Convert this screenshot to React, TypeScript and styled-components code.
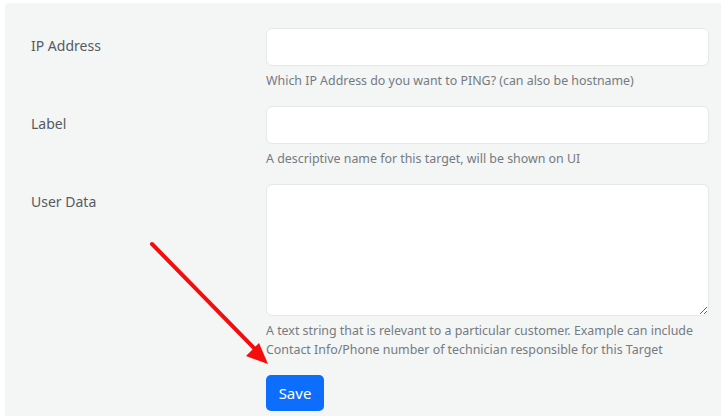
import React from "react";
import styled, { createGlobalStyle } from "styled-components";

const Global = createGlobalStyle`
  html, body { margin: 0; padding: 0; background: #ffffff; }
  body { font-family: "Noto Sans", "Liberation Sans", sans-serif; }
  * { box-sizing: border-box; }
`;

const Page = styled.div`
  position: relative;
  width: 721px;
  height: 416px;
  overflow: hidden;
  padding: 3px 0 0 5px;
`;

const Panel = styled.div`
  background: #f4f5f5;
  height: 420px;
  padding: 25px 12px 0 26px;
  border-radius: 4px 0 0 0;
`;

const Row = styled.div`
  display: grid;
  grid-template-columns: 235px 1fr;
  margin-bottom: 16px;
`;

const Label = styled.label`
  font-size: 14px;
  color: #555b60;
  padding-top: 7px;
  line-height: 22px;
`;

const Field = styled.div`
  display: flex;
  flex-direction: column;
`;

const Input = styled.input`
  height: 38px;
  border: 1px solid #e6e7e7;
  border-radius: 6px;
  background: #fff;
  outline: none;
`;

const TextArea = styled.textarea`
  height: 132px;
  border: 1px solid #e6e7e7;
  border-radius: 6px;
  background: #fff;
  outline: none;
  resize: vertical;
`;

const Help = styled.div`
  margin-top: 5px;
  font-size: 12.4px;
  line-height: 19px;
  color: #747b81;
  white-space: nowrap;
`;

const Button = styled.button`
  display: block;
  width: 58px;
  height: 36px;
  border: none;
  border-radius: 5px;
  background: #0d6efd;
  color: #fff;
  font-family: inherit;
  font-size: 15px;
  padding: 0;
  margin-top: 0;
`;

const Arrow = styled.svg`
  position: absolute;
  left: 0;
  top: 0;
  pointer-events: none;
`;

export default function App() {
  return (
    <Page>
      <Global />
      <Panel>
        <Row>
          <Label>IP Address</Label>
          <Field>
            <Input />
            <Help>Which IP Address do you want to PING? (can also be hostname)</Help>
          </Field>
        </Row>
        <Row>
          <Label>Label</Label>
          <Field>
            <Input />
            <Help>A descriptive name for this target, will be shown on UI</Help>
          </Field>
        </Row>
        <Row>
          <Label>User Data</Label>
          <Field>
            <TextArea />
            <Help>
              A text string that is relevant to a particular customer. Example can include
              <br />
              Contact Info/Phone number of technician responsible for this Target
            </Help>
          </Field>
        </Row>
        <Row>
          <span />
          <div>
            <Button>Save</Button>
          </div>
        </Row>
      </Panel>
      <Arrow width="721" height="416" viewBox="0 0 721 416">
        <line x1="152" y1="244" x2="256" y2="350" stroke="#f30d0d" strokeWidth="4" strokeLinecap="round" />
        <polygon points="268,364 246,356 259,343" fill="#f30d0d" />
      </Arrow>
    </Page>
  );
}
